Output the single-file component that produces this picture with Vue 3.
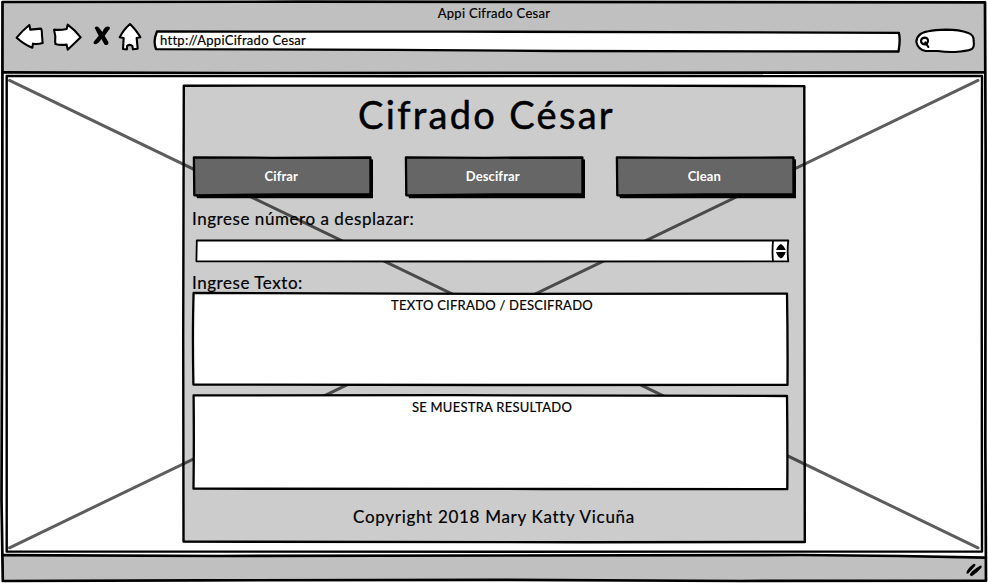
<script setup>
import { ref } from 'vue'

const actions = ['Cifrar', 'Descifrar', 'Clean']
const shift = ref('')
</script>

<template>
  <div class="window">
    <svg class="frame" viewBox="0 0 988 583" aria-hidden="true">
      <path class="chrome" d="M2.5 2 L985 2.5 L985.8 72.3 L2.5 72.3Z" />
      <path class="chrome" d="M3 555.5 L890 555.3 L985.8 557.7 L985.8 580.5 L500 580 L2.5 580.7Z" />
      <path class="ink outer" d="M2.5 2 L300 1.7 L985 2.3 L985.6 150 L985.3 440 L986 580.7 L740 581 L500 579.9 L200 580.3 L2.8 581 L1.5 500 L2.2 300 L2.5 2Z" />
      <path class="ink outer" d="M3 72.4 L240 73 L620 72.8 L985 72.3" />
      <path class="ink outer" d="M3 555.2 L220 556 L800 555 L900 556 L985.5 557.7" />
      <path class="ink thin" d="M6.7 76 L400 76.2 L982 76 L981.7 300 L982 551.5 L500 551.7 L6.7 551.6Z" />
      <path class="cross" d="M9.5 80.3 L978 547.8 M978 80.3 L9.5 547.8" />
    </svg>

    <header class="bar">
      <div class="title"><span>Appi Cifrado Cesar</span></div>
      <div class="tools">
        <svg class="nav" viewBox="45 66 384 90" aria-hidden="true">
          <path class="icon" d="M50 113 Q68 91 88 75 L91 89 L123 86 Q126 90 126 107 L128 129 Q112 134 99 131 L97 143 Q72 133 50 113Z" />
          <path class="icon" d="M162 89 Q181 91 200 87 L203 74 Q225 90 242 112 L203 149 L200 134 Q180 136 166 132 Q165 121 166 109Z" />
          <path class="solid" d="M284 83 Q290 76 297 83 L307 96 Q315 77 327 80 Q333 83 326 91 L314 107 L325 126 Q327 138 314 134 L304 117 Q294 135 283 132 Q277 129 285 121 L296 107Z" />
          <path class="icon" d="M390 72 Q411 93 421 112 L410 114 L413 146 L399 148 L397 138 Q390 131 381 138 L381 148 L369 147 L371 114 L359 112 Q369 91 390 72Z" />
        </svg>
        <div class="url">
          <svg class="outline" viewBox="0 0 746 22" aria-hidden="true">
            <path class="field" d="M3 .5 L300 .6 L744.9 1.8 Q746.6 9 744.5 20.5 L400 20 L240 18.8 L2 18.2 Q-1.2 10 3 .5Z" />
          </svg>
          <span>http://AppiCifrado Cesar</span>
        </div>
        <svg class="search" viewBox="765 81 183 81" aria-hidden="true">
          <path class="icon" d="M769 126 Q770 99 805 94 Q825 90 858 89 Q898 89 925 99 Q942 105 941 123 Q944 142 934 148 Q920 154 885 156 Q858 157 833 153 L797 153 Q774 149 769 126Z" />
          <path class="icon lens" d="M793 113 Q804 113 804 123 Q803 133 794 133 Q783 132 783 123 Q784 114 793 113Z M796 127 L805 141" />
        </svg>
      </div>
    </header>

    <main class="page">
      <section class="panel">
        <svg class="outline" viewBox="0 0 622 457" aria-hidden="true">
          <path class="ink thin" d="M.8 -.3 L220 -.4 L430 -.4 L621.3 .1 L621.5 180 L621.8 456 L400 456.3 L.5 455.6 L.2 250Z" />
        </svg>
        <h1><span>Cifrado César</span></h1>

        <div class="actions">
          <button v-for="label in actions" :key="label" type="button">
            <svg class="outline" viewBox="0 0 178.5 40" aria-hidden="true">
              <path class="shadow" d="M3 38 L4 41.3 L180 41.3 L180 2.6 L176 2 L176 38Z" />
              <path class="fill" d="M.9 .3 L80 .8 L177.4 .5 L177.5 37.3 L90 37.5 L1.3 38.3Z" />
            </svg>
            <span>{{ label }}</span>
          </button>
        </div>

        <label class="shift-label" for="shift"><span>Ingrese número a desplazar:</span></label>
        <div class="stepper">
          <svg class="outline" viewBox="0 0 593 22" aria-hidden="true">
            <path class="field slim" d="M.8 .5 L300 .5 L592.3 .5 Q591 11 592.3 21.3 L300 21.5 L.4 21.3Z M577 1 Q576 12 577 21" />
            <path class="solid" d="M580 9.9 Q582 5 585 4 Q588 5.5 589.8 9.9Z M580 12 L589.8 12 Q588 17 585 18.5 Q581.5 17 580 12Z" />
          </svg>
          <input id="shift" v-model="shift" />
        </div>

        <div class="text-label"><span>Ingrese Texto:</span></div>
        <div class="box source">
          <svg class="outline" viewBox="0 0 595 92" aria-hidden="true">
            <path class="field" d="M.6 0 L300 .8 L594 .6 Q594.8 45 594.5 91.9 L300 92 L.4 91.6 Q-.6 40 .6 0Z" />
          </svg>
          <span>TEXTO CIFRADO / DESCIFRADO</span>
        </div>
        <div class="box result">
          <svg class="outline" viewBox="0 0 595 94" aria-hidden="true">
            <path class="field" d="M.6 .4 L260 .2 L594 1 Q594.6 45 594.3 94.2 L350 94 L.5 93.7 Q1.1 50 .6 .4Z" />
          </svg>
          <span>SE MUESTRA RESULTADO</span>
        </div>
        <footer class="credit"><span>Copyright 2018 Mary Katty Vicuña</span></footer>
      </section>
    </main>

    <div class="status">
      <svg class="grip" viewBox="915 367 54 48" aria-hidden="true">
        <path class="solid" d="M919 401 Q918 391 940 373 Q948 370 946 378 L924 402Z M929 406 Q931 395 960 378 Q967 376 965 383 Q956 396 935 410Z" />
      </svg>
    </div>
  </div>
</template>

<style>
body {
  margin: 0;
  background: #fff;
}
</style>

<style scoped>
.window {
  position: relative;
  display: flex;
  flex-direction: column;
  width: 988px;
  height: 583px;
  overflow: hidden;
  color: #000;
  font-family: Lato, "Liberation Sans", sans-serif;
  -webkit-text-stroke: 0.2px currentColor;
}
.window * {
  box-sizing: border-box;
}
span {
  position: relative;
  white-space: nowrap;
}
.frame,
.outline {
  position: absolute;
  inset: 0;
  width: 100%;
  height: 100%;
  overflow: visible;
}
.chrome {
  fill: #c0c0c0;
}
.ink {
  fill: none;
  stroke: #000;
  stroke-width: 3;
  stroke-linejoin: round;
  stroke-linecap: round;
}
.outer {
  stroke-width: 2.7;
}
.thin {
  stroke-width: 2.4;
}
.cross {
  stroke: #5d5d5d;
  stroke-width: 3;
  stroke-linecap: round;
}
.field {
  fill: #fff;
  stroke: #000;
  stroke-width: 2.3;
  stroke-linejoin: round;
}
.slim {
  stroke-width: 1.8;
}
.icon {
  fill: #fff;
  stroke: #000;
  stroke-width: 6.3;
  stroke-linejoin: round;
  stroke-linecap: round;
}
.solid {
  fill: #000;
}
.bar {
  position: relative;
  height: 75px;
}
.title {
  height: 22px;
  padding-top: 5px;
  text-align: center;
  font-size: 13px;
  line-height: 17px;
  letter-spacing: 0.28px;
}
.tools {
  display: flex;
  padding-left: 15px;
}
.nav {
  width: 128px;
  height: 30px;
  margin-right: 11px;
}
.url {
  position: relative;
  width: 746px;
  height: 22px;
  margin: 9px 15px 0 0;
  padding-left: 6px;
  font-size: 13px;
  line-height: 19px;
  letter-spacing: 0.29px;
}
.search {
  width: 61px;
  height: 27px;
  margin-top: 5px;
}
.page {
  display: flex;
  height: 480px;
  padding: 11px 0 0 183px;
}
.panel {
  position: relative;
  width: 622px;
  height: 457px;
  padding: 0 10px;
  background: rgba(0, 0, 0, 0.2);
}
h1 {
  height: 71px;
  margin: 0;
  padding: 4px 15px 0 0;
  text-align: center;
  font-size: 38px;
  font-weight: 400;
  line-height: 48px;
  letter-spacing: 2.3px;
  -webkit-text-stroke-width: 0.5px;
}
.actions {
  display: flex;
  gap: 33px;
}
button {
  position: relative;
  width: 178.5px;
  height: 40px;
  padding: 0 2px 2px 0;
  border: 0;
  background: none;
  color: #fff;
  font: 700 13px/36px Lato, sans-serif;
  letter-spacing: 0.1px;
  -webkit-text-stroke-width: 0;
}
.fill {
  fill: #666;
  stroke: #000;
  stroke-width: 2.3;
  stroke-linejoin: round;
}
.shift-label,
.text-label {
  display: block;
  margin-left: -1px;
  font-size: 17px;
  letter-spacing: 0.55px;
}
.shift-label {
  height: 43px;
  padding-top: 11px;
  line-height: 22px;
}
.text-label {
  height: 31px;
  padding-top: 10px;
  line-height: 22px;
}
.stepper {
  position: relative;
  width: 593px;
  height: 22px;
  margin-left: 3px;
}
input {
  position: relative;
  display: block;
  width: 572px;
  height: 18px;
  padding: 0 4px;
  border: 0;
  outline: 0;
  background: transparent;
  font: inherit;
}
.box {
  position: relative;
  width: 595px;
  height: 92px;
  padding-left: 3px;
  text-align: center;
  font-size: 13px;
  line-height: 24px;
  letter-spacing: 0.25px;
}
.result {
  height: 94px;
  margin-top: 10px;
}
.credit {
  padding-top: 16px;
  text-align: center;
  font-size: 17px;
  line-height: 24px;
  letter-spacing: 0.7px;
}
.status {
  display: flex;
  justify-content: flex-end;
  padding: 7px 5px 0 0;
}
.grip {
  position: relative;
  width: 18px;
  height: 16px;
}
</style>
